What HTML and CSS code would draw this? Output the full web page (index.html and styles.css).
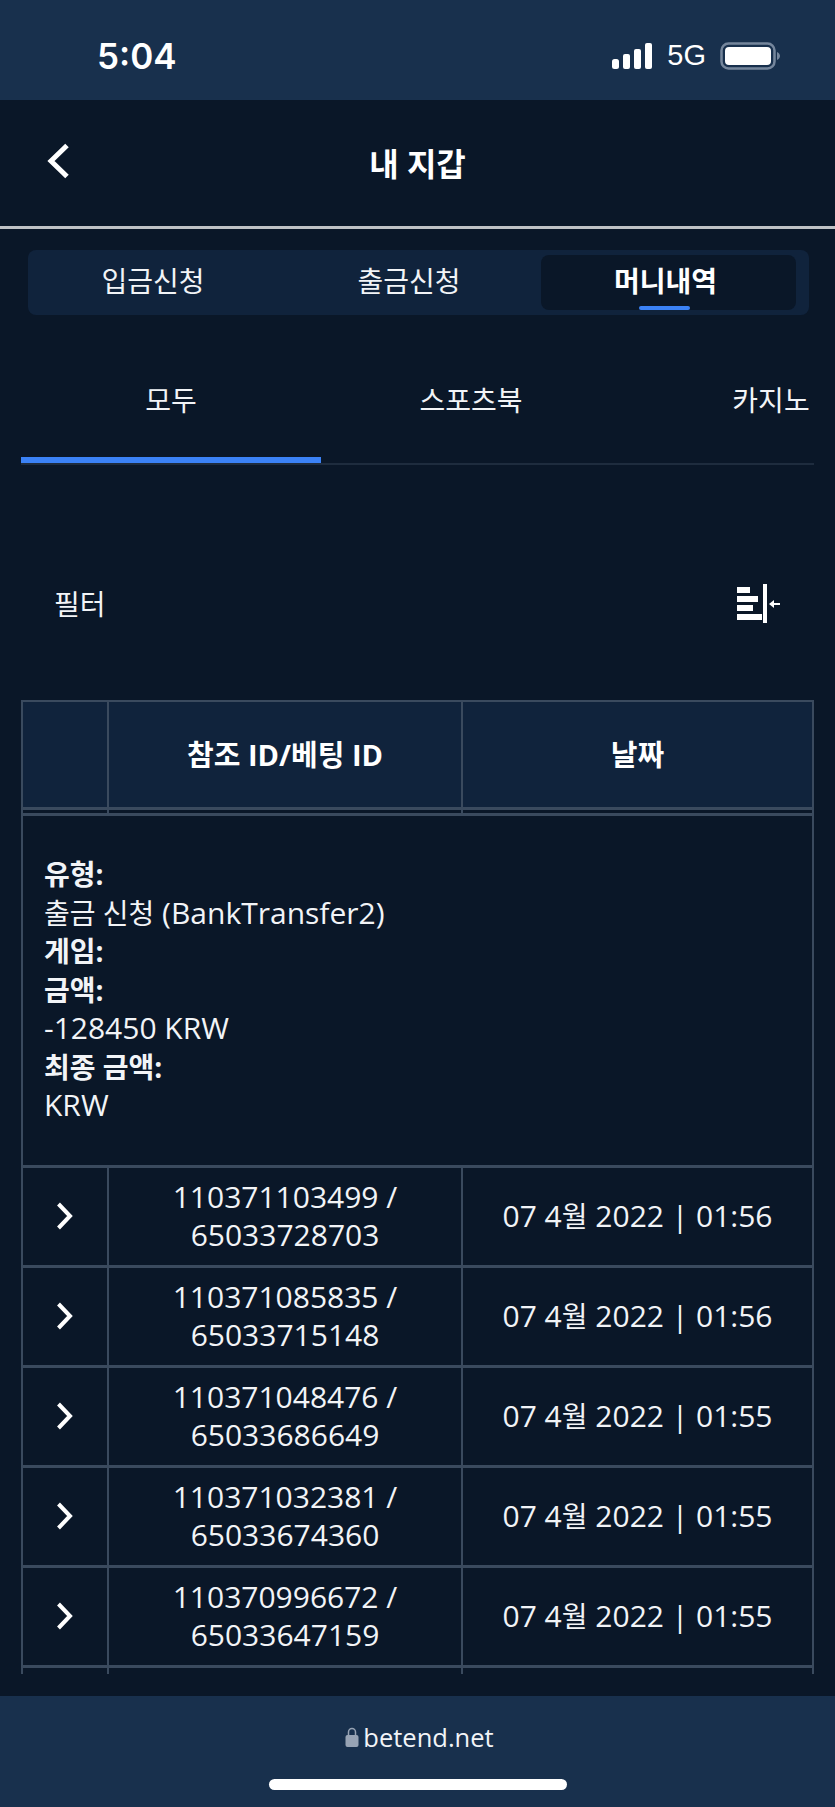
FILE: index.html
```html
<!DOCTYPE html>
<html lang="ko">
<head>
<meta charset="utf-8">
<title>내 지갑</title>
<link rel="stylesheet" href="styles.css">
</head>
<body>
<div class="status-bar">
    <span class="time">5:04</span>
    <div class="status-icons">
        <svg width="42" height="28" viewBox="0 0 42 28"><rect x="1" y="17" width="7" height="10" rx="2.5" fill="#fff"/><rect x="12" y="12" width="7" height="15" rx="2" fill="#fff"/><rect x="23" y="7" width="7" height="20" rx="2" fill="#fff"/><rect x="34" y="1" width="7" height="26" rx="2" fill="#fff"/></svg>
        <span class="net">5G</span>
        <svg width="60" height="28" viewBox="0 0 60 28"><rect x="1.500" y="1.500" width="53" height="25" rx="7" fill="none" stroke="#75869c" stroke-width="2.500"/><rect x="5" y="5" width="46" height="18" rx="4" fill="#fff"/><path d="M57 10c2 1 3 2.500 3 4s-1 3-3 4z" fill="#75869c"/></svg>
    </div>
</div>

<div class="nav">
    <svg width="24" height="36" viewBox="0 0 24 36"><path d="M20 2.500 4 18l16 15.500" fill="none" stroke="#fff" stroke-width="5"/></svg>
    <h1>내 지갑</h1>
</div>

<div class="segments">
    <div class="segment">입금신청</div>
    <div class="segment">출금신청</div>
    <div class="segment active">머니내역</div>
</div>

<div class="tabs">
    <div class="tab selected">모두</div>
    <div class="tab">스포츠북</div>
    <div class="tab">카지노</div>
</div>

<div class="filter">
    <span>필터</span>
    <svg width="43" height="39" viewBox="0 0 43 39"><g fill="#fff"><rect x="0" y="3" width="13" height="6"/><rect x="0" y="12" width="21" height="6"/><rect x="0" y="21" width="16" height="6"/><rect x="0" y="30" width="25" height="6"/><rect x="26" y="0" width="4" height="39"/><path d="M32 20l5-4v3h6v2h-6v3z"/></g></svg>
</div>

<div class="table-wrap">
    <table class="money">
        <thead>
            <tr><th class="c1"></th><th class="c2">참조 ID/베팅 ID</th><th>날짜</th></tr>
        </thead>
        <tbody>
            <tr class="stub"><td></td><td></td><td></td></tr>
            <tr class="detail">
                <td colspan="3">
                    <b class="ko">유형:</b><br>
                    <span class="ko">출금 신청</span> (BankTransfer2)<br>
                    <b class="ko">게임:</b><br>
                    <b class="ko">금액:</b><br>
                    -128450 KRW<br>
                    <b class="ko">최종 금액:</b><br>
                    KRW
                </td>
            </tr>
            <tr>
                <td><svg class="arrow" width="18" height="28" viewBox="0 0 18 28"><path d="M2.500 2 14 14 2.500 26" fill="none" stroke="#fff" stroke-width="4"/></svg></td>
                <td>110371103499 /<br>65033728703</td>
                <td>07 4<span class="ko">월</span> 2022 | 01:56</td>
            </tr>
            <tr>
                <td><svg class="arrow" width="18" height="28" viewBox="0 0 18 28"><path d="M2.500 2 14 14 2.500 26" fill="none" stroke="#fff" stroke-width="4"/></svg></td>
                <td>110371085835 /<br>65033715148</td>
                <td>07 4<span class="ko">월</span> 2022 | 01:56</td>
            </tr>
            <tr>
                <td><svg class="arrow" width="18" height="28" viewBox="0 0 18 28"><path d="M2.500 2 14 14 2.500 26" fill="none" stroke="#fff" stroke-width="4"/></svg></td>
                <td>110371048476 /<br>65033686649</td>
                <td>07 4<span class="ko">월</span> 2022 | 01:55</td>
            </tr>
            <tr>
                <td><svg class="arrow" width="18" height="28" viewBox="0 0 18 28"><path d="M2.500 2 14 14 2.500 26" fill="none" stroke="#fff" stroke-width="4"/></svg></td>
                <td>110371032381 /<br>65033674360</td>
                <td>07 4<span class="ko">월</span> 2022 | 01:55</td>
            </tr>
            <tr>
                <td><svg class="arrow" width="18" height="28" viewBox="0 0 18 28"><path d="M2.500 2 14 14 2.500 26" fill="none" stroke="#fff" stroke-width="4"/></svg></td>
                <td>110370996672 /<br>65033647159</td>
                <td>07 4<span class="ko">월</span> 2022 | 01:55</td>
            </tr>
            <tr><td></td><td></td><td></td></tr>
        </tbody>
    </table>
</div>

<div class="browser-bar">
    <div class="url">
        <svg width="14" height="20" viewBox="0 0 14 20"><path d="M3.500 9V5a3.500 3.500 0 0 1 7 0v4" fill="none" stroke="#97a3b4" stroke-width="1.500"/><rect x="0.500" y="8" width="13" height="12" rx="2" fill="#97a3b4"/></svg>
        <span>betend.net</span>
    </div>
    <div class="home"></div>
</div>
</body>
</html>
```

FILE: styles.css
```css
html, body {
    margin: 0;
    height: 1807px;
    overflow: hidden;
}
body {
    display: flex;
    flex-direction: column;
    background-color: #0a1728;
    color: #f2f4f7;
    font-family: "Open Sans", "Noto Sans CJK KR", sans-serif;
    font-size: 28px;
}

.status-bar {
    height: 100px;
    flex: none;
    background-color: #18304d;
    display: flex;
    justify-content: space-between;
    align-items: center;
    padding: 11px 55px 0 97px;
    box-sizing: border-box;
    font-family: "Liberation Sans", sans-serif;
    color: #fff;
}
.time {
    font-family: Inter, sans-serif;
    font-size: 35px;
    font-weight: 600;
}
.status-icons {
    display: flex;
    align-items: center;
    gap: 14px;
}
.net {
    font-size: 29px;
}

.nav {
    height: 129px;
    flex: none;
    box-sizing: border-box;
    border-bottom: 3px solid #bfc2c6;
    display: grid;
    grid-template-columns: 1fr auto 1fr;
    align-items: center;
    padding-left: 47px;
}
.nav svg {
    margin-top: -4px;
}
.nav h1 {
    margin: -2px 0 0 -47px;
    font-size: 32px;
    font-weight: bold;
    color: #fff;
    grid-column: 2;
}

.segments {
    flex: none;
    margin: 21px 26px 0 28px;
    height: 65px;
    box-sizing: border-box;
    padding: 5px 13px 5px 0;
    background-color: #10233c;
    border-radius: 8px;
    display: grid;
    grid-template-columns: 256px 256px 256px;
}
.segment {
    position: relative;
    display: flex;
    align-items: center;
    justify-content: center;
    padding-bottom: 5px;
    padding-right: 6px;
    box-sizing: border-box;
}
.segment.active {
    margin-left: 1px;
    background-color: #0a1728;
    border-radius: 8px;
    font-weight: bold;
    color: #fff;
}
.segment.active::after {
    content: "";
    position: absolute;
    left: 98px;
    bottom: 0;
    width: 51px;
    height: 4px;
    border-radius: 2px;
    background-color: #3b82f6;
}

.tabs {
    flex: none;
    margin: 51px 21px 0;
    height: 97px;
    display: flex;
    overflow: hidden;
    border-bottom: 2px solid #1e2c3e;
}
.tab {
    flex: 0 0 300px;
    height: 91px;
    display: flex;
    align-items: flex-start;
    justify-content: center;
    padding-top: 13px;
    box-sizing: border-box;
}
.tab.selected {
    height: 97px;
    border-bottom: 6px solid #3b82f6;
}

.filter {
    flex: none;
    margin-top: 107px;
    height: 62px;
    padding: 0 55px 0 54px;
    display: flex;
    justify-content: space-between;
    align-items: center;
}

.table-wrap {
    flex: none;
    margin: 66px 21px 0;
    height: 974px;
    overflow: hidden;
}
.money {
    width: 793px;
    table-layout: fixed;
    border-collapse: collapse;
    text-align: center;
    font-size: 30px;
    line-height: 38px;
}
.money th, .money td {
    padding: 0;
}
.money th {
    border: 2px solid #3a4a5e;
    height: 105px;
    background-color: #10233c;
    font-size: 29px;
    font-weight: bold;
    color: #fff;
}
.money td {
    border-style: solid;
    border-color: #3a4a5e;
    border-width: 3px 2px;
    height: 97px;
}
.money .c1 {
    width: 84px;
}
.money .c2 {
    width: 352px;
}
.money .ko {
    font-size: 28px;
}
.money .stub td {
    height: 3px;
}
.money .detail td {
    height: auto;
    text-align: left;
    padding: 39px 21px 40px;
    line-height: 38.5px;
}
.arrow {
    display: block;
    margin: 0 auto;
}

.browser-bar {
    flex: none;
    margin-top: 22px;
    height: 111px;
    background-color: #18304d;
    display: flex;
    flex-direction: column;
    align-items: center;
    padding-top: 23px;
    box-sizing: border-box;
}
.url {
    display: flex;
    align-items: center;
    gap: 4px;
    margin-left: 4px;
    font-size: 25.500px;
    line-height: 36px;
    color: #f2f4f7;
}
.home {
    margin-top: 24px;
    width: 298px;
    height: 11px;
    border-radius: 6px;
    background-color: #fff;
}
```
